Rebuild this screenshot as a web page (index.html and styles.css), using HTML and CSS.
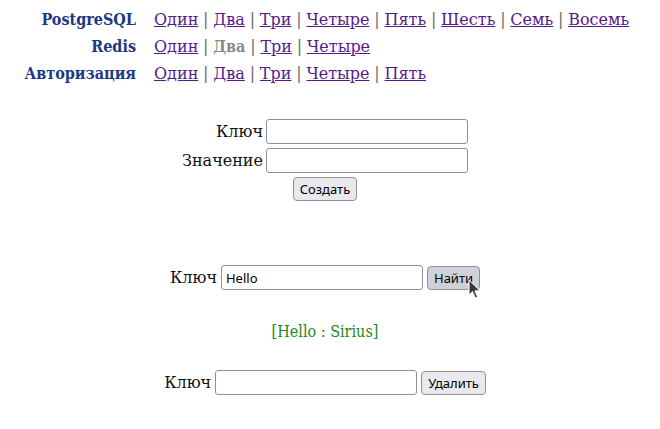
FILE: index.html
```html
<!DOCTYPE html>
<html lang="ru">
<head>
<meta charset="utf-8">
<title>Demo</title>
<link rel="stylesheet" href="styles.css">
</head>
<body>
<nav class="menu">
  <div class="menu-title">PostgreSQL</div>
  <div class="menu-links"><a href="#">Один</a> <span class="sep">|</span> <a href="#">Два</a> <span class="sep">|</span> <a href="#">Три</a> <span class="sep">|</span> <a href="#">Четыре</a> <span class="sep">|</span> <a href="#">Пять</a> <span class="sep">|</span> <a href="#">Шесть</a> <span class="sep">|</span> <a href="#">Семь</a> <span class="sep">|</span> <a href="#">Восемь</a></div>
  <div class="menu-title">Redis</div>
  <div class="menu-links"><a href="#">Один</a> <span class="sep">|</span> <b class="current">Два</b> <span class="sep">|</span> <a href="#">Три</a> <span class="sep">|</span> <a href="#">Четыре</a></div>
  <div class="menu-title">Авторизация</div>
  <div class="menu-links"><a href="#">Один</a> <span class="sep">|</span> <a href="#">Два</a> <span class="sep">|</span> <a href="#">Три</a> <span class="sep">|</span> <a href="#">Четыре</a> <span class="sep">|</span> <a href="#">Пять</a></div>
</nav>

<main class="content">
  <form class="create">
    <label class="lbl">Ключ</label><input class="field" type="text">
    <label class="lbl">Значение</label><input class="field" type="text">
    <button class="btn btn-create" type="button">Создать</button>
  </form>

  <form class="line find">
    <label class="lbl">Ключ</label><input class="field" type="text" value="Hello"><span class="btn-wrap"><button class="btn btn-hover" type="button">Найти</button><svg class="cursor" width="14" height="21" viewBox="0 0 14 21"><path d="M1 1 L1 16 L4.5 12.5 L7.2 19 L9.6 18 L7 11.8 L12 11.8 Z" fill="#3a3a3a" stroke="#ffffff" stroke-width="1" stroke-linejoin="round"/></svg></span>
  </form>

  <p class="result">[Hello : Sirius]</p>

  <form class="line remove">
    <label class="lbl">Ключ</label><input class="field" type="text"><button class="btn" type="button">Удалить</button>
  </form>
</main>
</body>
</html>
```

FILE: styles.css
```css
html, body {
  margin: 0;
  padding: 0;
  background: #ffffff;
}

body {
  font-family: "DejaVu Serif", "Liberation Serif", serif;
  font-size: 16px;
  color: #111111;
}

.menu {
  display: grid;
  grid-template-columns: 128px auto;
  column-gap: 18px;
  grid-auto-rows: 27px;
  align-items: center;
  padding-top: 6px;
  padding-left: 8px;
}

.menu-title {
  text-align: right;
  font-family: "DejaVu Serif Condensed", "DejaVu Serif", serif;
  font-stretch: condensed;
  font-weight: bold;
  color: #1a3884;
}

.menu-links {
  white-space: nowrap;
  word-spacing: -0.3px;
}

.menu-links a {
  color: #551a8b;
  text-decoration: underline;
}

.sep {
  color: #6a6a6a;
}

.current {
  font-family: "DejaVu Serif Condensed", "DejaVu Serif", serif;
  font-stretch: condensed;
  color: #8a8a8a;
}

.content {
  padding-right: 10px;
  padding-top: 32px;
}

.create {
  display: grid;
  grid-template-columns: auto auto;
  column-gap: 3px;
  row-gap: 4px;
  justify-content: center;
  align-items: center;
  margin: 0;
}

.lbl {
  text-align: right;
}

.field {
  box-sizing: border-box;
  width: 202px;
  height: 25px;
  border: 1px solid #8f8f9d;
  border-radius: 3px;
  padding: 1px 4px;
  font-family: "Noto Sans", "DejaVu Sans", sans-serif;
  font-size: 13px;
  color: #000;
  background: #fff;
  margin: 0;
}

.btn {
  box-sizing: border-box;
  height: 24px;
  padding: 0 6px;
  border: 1px solid #8f8f9d;
  border-radius: 4px;
  background: #e9e9ed;
  font-family: "Noto Sans", "DejaVu Sans", sans-serif;
  font-size: 13px;
  color: #000;
  margin: 0;
}

.btn-create {
  grid-column: 1 / -1;
  justify-self: center;
}

.btn-hover {
  background: #d0d0d7;
}

.line {
  display: flex;
  justify-content: center;
  align-items: center;
  gap: 4px;
  margin: 0;
}

.find {
  margin-top: 64px;
}

.btn-wrap {
  position: relative;
  display: inline-block;
  height: 24px;
}

.cursor {
  position: absolute;
  left: 41px;
  top: 13px;
}

.result {
  text-align: center;
  font-family: "DejaVu Serif Condensed", "DejaVu Serif", serif;
  font-stretch: condensed;
  color: #1a8a1a;
  margin: 31px 0 27px;
  line-height: 22px;
}
```
